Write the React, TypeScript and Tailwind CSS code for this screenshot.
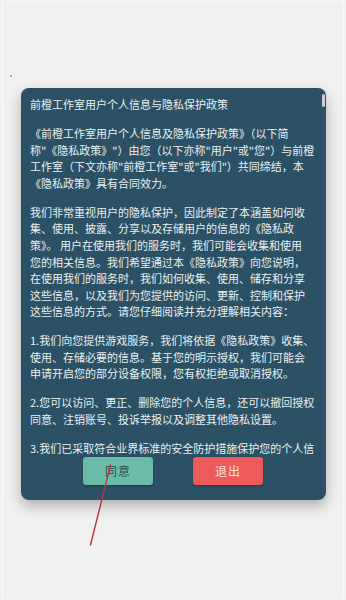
import React from "react";

const font = { fontFamily: '"Noto Sans CJK SC", "Noto Sans", sans-serif' };

const paras: string[][] = [
  [
    "《前橙工作室用户个人信息及隐私保护政策》（以下简",
    "称\"《隐私政策》\"）由您（以下亦称\"用户\"或\"您\"）与前橙",
    "工作室（下文亦称\"前橙工作室\"或\"我们\"）共同缔结，本",
    "《隐私政策》具有合同效力。",
  ],
  [
    "我们非常重视用户的隐私保护，因此制定了本涵盖如何收",
    "集、使用、披露、分享以及存储用户的信息的《隐私政",
    "策》。 用户在使用我们的服务时，我们可能会收集和使用",
    "您的相关信息。我们希望通过本《隐私政策》向您说明，",
    "在使用我们的服务时，我们如何收集、使用、储存和分享",
    "这些信息，以及我们为您提供的访问、更新、控制和保护",
    "这些信息的方式。请您仔细阅读并充分理解相关内容：",
  ],
  [
    "1.我们向您提供游戏服务，我们将依据《隐私政策》收集、",
    "使用、存储必要的信息。基于您的明示授权，我们可能会",
    "申请开启您的部分设备权限，您有权拒绝或取消授权。",
  ],
  [
    "2.您可以访问、更正、删除您的个人信息，还可以撤回授权",
    "同意、注销账号、投诉举报以及调整其他隐私设置。",
  ],
  ["3.我们已采取符合业界标准的安全防护措施保护您的个人信"],
];

export default function App() {
  return (
    <div className="relative h-[600px] w-[346px] overflow-hidden bg-[#f1f1f1]" style={font}>
      <div className="h-[598px] mx-[2px] mt-[1px] border-t border-l border-r border-[#f9f9f9] pt-[86px]">
        <div className="relative mx-auto w-[305px] h-[412px] rounded-[8px] bg-[#2c5164] shadow-[0_6px_14px_rgba(0,0,0,0.28)] flex flex-col pt-[8px] pb-[15px]">
          <div className="absolute right-[1px] top-[6px] w-[3px] h-[13px] rounded-full bg-[#c9d0d4]" />
          <div className="h-[361px] overflow-hidden pl-[9.5px] text-[11px] leading-[16.6px] text-[#eaf0f2] flex flex-col gap-[12.4px]">
            <div className="whitespace-nowrap">前橙工作室用户个人信息与隐私保护政策</div>
            {paras.map((p, i) => (
              <div key={i}>
                {p.map((l, j) => (
                  <div key={j} className="whitespace-nowrap">
                    {l}
                  </div>
                ))}
              </div>
            ))}
          </div>
          <div className="flex justify-center gap-[40px]">
            <button className="w-[70px] h-[28px] rounded-[3px] bg-[#6abca8] text-[#2b4b4e] text-[12px] tracking-[1px] shadow-[0_1px_2px_rgba(0,0,0,0.3)]">
              同意
            </button>
            <button className="w-[70px] h-[28px] rounded-[3px] bg-[#ee5a5a] text-[#fbe0e0] text-[12px] tracking-[1px] shadow-[0_1px_2px_rgba(0,0,0,0.3)]">
              退出
            </button>
          </div>
        </div>
      </div>
      <div className="absolute left-[10px] top-[75px] w-[2px] h-[2px] rounded-full bg-[#d47a8a]" />
      <svg className="absolute left-0 top-0 pointer-events-none" width="346" height="600">
        <line x1="110.5" y1="465" x2="90.5" y2="545" stroke="#b8323a" strokeWidth="1.4" strokeLinecap="round" />
      </svg>
    </div>
  );
}
